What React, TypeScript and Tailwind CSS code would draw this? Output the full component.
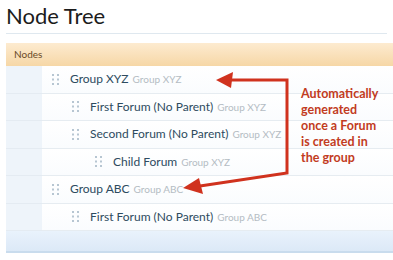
import React from "react";

type Node = {
    title: string;
    parent: string;
    depth: number;
};

const nodes: Node[] = [
    { title: "Group XYZ", parent: "Group XYZ", depth: 0 },
    { title: "First Forum (No Parent)", parent: "Group XYZ", depth: 1 },
    { title: "Second Forum (No Parent)", parent: "Group XYZ", depth: 1 },
    { title: "Child Forum", parent: "Group XYZ", depth: 2 },
    { title: "Group ABC", parent: "Group ABC", depth: 0 },
    { title: "First Forum (No Parent)", parent: "Group ABC", depth: 1 },
];

const indent = ["pl-[10px]", "pl-[30px]", "pl-[53px]"];

// six-dot drag grip
function Grip() {
    return (
        <svg width="7" height="11" viewBox="0 0 7 11" className="shrink-0">
            {[0, 4.5, 9].map((y) => (
                <g key={y} fill="#b7c6d2">
                    <rect x="0" y={y} width="2" height="2" />
                    <rect x="5" y={y} width="2" height="2" />
                </g>
            ))}
        </svg>
    );
}

function Row({ node }: { node: Node }) {
    return (
        <div className="flex h-[27.5px]">
            <div className="w-[36px] shrink-0 bg-[#eef4fa] border-b border-[#e4ebf2]" />
            <div className={`flex flex-1 items-center gap-[11px] border-b border-[#e6ecf1] bg-gradient-to-b from-white to-[#fafcfe] ${indent[node.depth]}`}>
                <Grip />
                <div className="flex items-baseline gap-[4px] whitespace-nowrap">
                    <span className="text-[12px] text-[#2d4b60]">{node.title}</span>
                    <span className="text-[10px] text-[#b4bcc3]">{node.parent}</span>
                </div>
            </div>
        </div>
    );
}

export default function App() {
    return (
        <div className="relative w-[393px] h-[260px] overflow-hidden bg-white font-['Lato',sans-serif]">
            <div className="mx-[6px] h-[34px] border-b border-[#dfe8ef] pt-[2px]">
                <h1 className="text-[22px] leading-[28px] text-[#1c1c1c]">Node Tree</h1>
            </div>

            <div className="ml-[6px] mt-[9px]">
                <div className="flex h-[23px] items-center bg-gradient-to-b from-[#fdebd0] to-[#f6d7a6] pl-[8px] text-[10px] text-[#6a4a26]">
                    Nodes
                </div>
                {nodes.map((node, i) => (
                    <Row key={i} node={node} />
                ))}
                <div className="h-[22px] border-b-2 border-[#c9dced] bg-gradient-to-b from-[#e9f2fc] to-[#dce9f7]" />
            </div>

            {/* annotation arrows */}
            <svg className="absolute left-0 top-0 pointer-events-none" width="393" height="260" viewBox="0 0 393 260">
                <g fill="none" stroke="#d0321e" strokeWidth="3" strokeLinejoin="miter">
                    <polyline points="230,80 287,80 287,173 200,186" />
                </g>
                <polygon points="216,80 233,72 231,88" fill="#d0321e" />
                <polygon points="183,188 199,178 203,194" fill="#d0321e" />
            </svg>

            <div className="absolute left-[301px] top-[86px] text-[12.5px] font-bold leading-[16px] text-[#c23b22]">
                Automatically
                <br />
                generated
                <br />
                once a Forum
                <br />
                is created in
                <br />
                the group
            </div>
        </div>
    );
}
